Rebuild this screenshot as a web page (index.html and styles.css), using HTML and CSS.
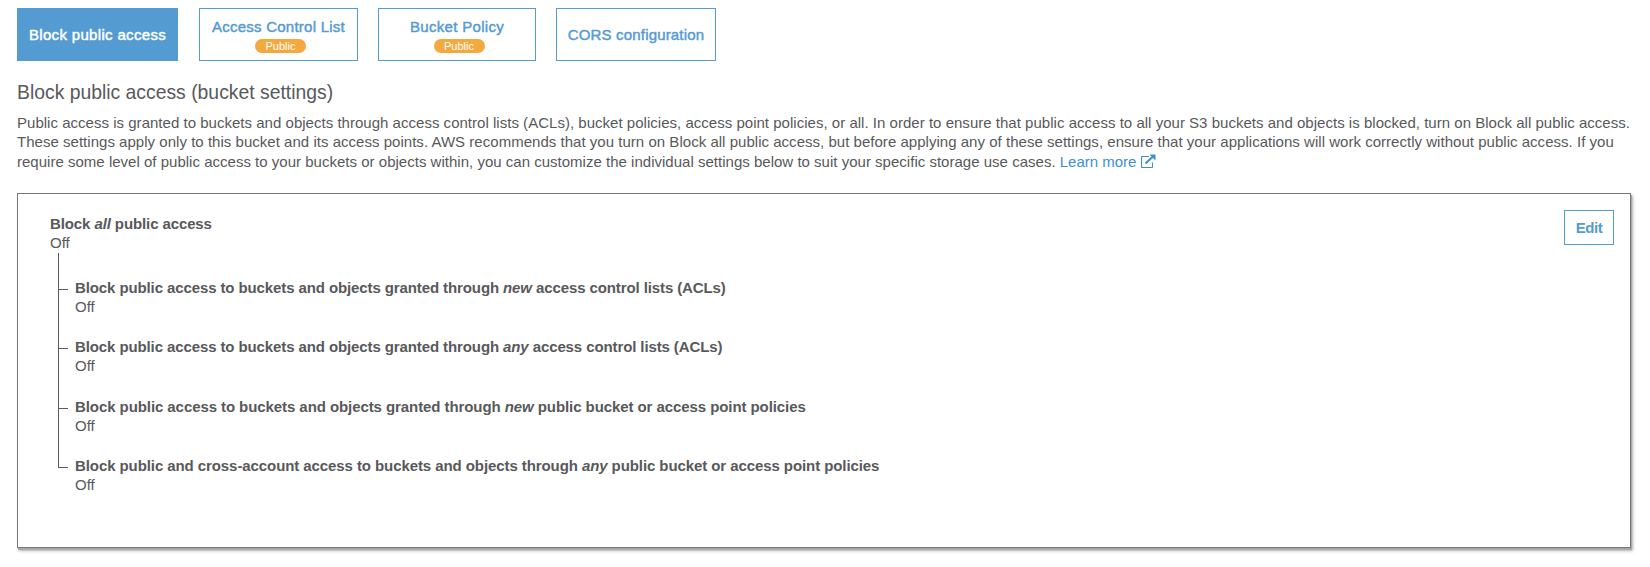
FILE: index.html
```html
<!DOCTYPE html>
<html lang="en">
<head>
<meta charset="utf-8">
<title>Block public access</title>
<link rel="stylesheet" href="styles.css">
</head>
<body>
<nav class="tabs">
  <button class="tab tab-block">Block public access</button>
  <button class="tab tab-acl">Access Control List<span class="badge">Public</span></button>
  <button class="tab tab-policy">Bucket Policy<span class="badge">Public</span></button>
  <button class="tab tab-cors">CORS configuration</button>
</nav>
<main>
  <h1 class="title">Block public access (bucket settings)</h1>
  <p class="intro">
    <span class="line-1">Public access is granted to buckets and objects through access control lists (ACLs), bucket policies, access point policies, or all. In order to ensure that public access to all your S3 buckets and objects is blocked, turn on Block all public access.</span><br>
    <span class="line-2">These settings apply only to this bucket and its access points. AWS recommends that you turn on Block all public access, but before applying any of these settings, ensure that your applications will work correctly without public access. If you</span><br>
    <span class="line-3">require some level of public access to your buckets or objects within, you can customize the individual settings below to suit your specific storage use cases.</span>
    <a class="learn">Learn more<svg class="external" viewBox="0 0 16 15" width="16" height="15" fill="none" stroke="currentColor"><path d="M9 2.5H2Q1.5 2.5 1.5 3V13Q1.5 13.5 2 13.5H12Q12.5 13.5 12.5 13V8.5" stroke-width="1.1"/><path d="M5.5 9.5L13 2.5" stroke-width="2"/><path d="M9.5 .5H15.5V6.5Z" fill="currentColor" stroke="none"/></svg></a>
  </p>
  <section class="panel">
    <div class="settings">
      <h2 class="name">Block <em>all</em> public access</h2>
      <div class="state">Off</div>
      <ul class="tree">
        <li class="item"><h3 class="name">Block public access to buckets and objects granted through <em>new</em> access control lists (ACLs)</h3><div class="state">Off</div></li>
        <li class="item"><h3 class="name">Block public access to buckets and objects granted through <em>any</em> access control lists (ACLs)</h3><div class="state">Off</div></li>
        <li class="item"><h3 class="name name-new">Block public access to buckets and objects granted through <em>new</em> public bucket or access point policies</h3><div class="state">Off</div></li>
        <li class="item"><h3 class="name name-any">Block public and cross-account access to buckets and objects through <em>any</em> public bucket or access point policies</h3><div class="state">Off</div></li>
      </ul>
    </div>
    <button class="edit">Edit</button>
  </section>
</main>
</body>
</html>
```
FILE: styles.css
```css
* { box-sizing: border-box; }

body {
  margin: 0;
  padding: 8px 19px 12px 17px;
  background: #fff;
  color: #58595b;
  font: 15px/19.3px "Liberation Sans", Arial, sans-serif;
  white-space: nowrap;
}

h1, h2, h3, p, ul { margin: 0; padding: 0; }

.tabs { display: flex; }

.tab {
  display: flex;
  flex-direction: column;
  align-items: center;
  justify-content: center;
  height: 53px;
  padding: 0;
  border: 1px solid #549bd2;
  background: #fff;
  color: #549bd2;
  font: inherit;
  -webkit-text-stroke: 0.45px currentColor;
}

.tab-block {
  width: 161px;
  margin-right: 21px;
  background: #549bd2;
  color: #fff;
  letter-spacing: 0.33px;
}

.tab-acl { width: 159px; margin-right: 20px; letter-spacing: 0.24px; }
.tab-policy { width: 158px; margin-right: 20px; letter-spacing: 0.32px; }
.tab-cors { width: 160px; letter-spacing: 0.17px; }

.badge {
  width: 51px;
  height: 14px;
  margin: 2px 0 -1px 4px;
  border-radius: 7px;
  background: #f3a93e;
  color: #fff;
  font-size: 11px;
  line-height: 14px;
  letter-spacing: 0;
  text-align: center;
  -webkit-text-stroke: 0;
}

.title {
  margin-top: 19px;
  font-size: 19.35px;
  font-weight: 400;
  line-height: 24px;
}

.intro { margin-top: 9px; }
.line-1 { letter-spacing: 0.022px; }
.line-2 { letter-spacing: 0.027px; }
.line-3 { letter-spacing: 0.014px; }

.learn { color: #3d8fce; }
.external { margin-left: 4px; vertical-align: -2px; }

.panel {
  display: flex;
  justify-content: space-between;
  align-items: flex-start;
  height: 355px;
  margin-top: 22px;
  padding: 16px 16px 0 32px;
  border: 1px solid #77787a;
  box-shadow: 1px 2px 1px #a7a8aa, 2px 3px 3px rgba(0, 0, 0, 0.28);
}

.settings { padding-top: 4px; line-height: 19px; }

.name {
  font-size: 15px;
  font-weight: 700;
  letter-spacing: -0.105px;
}

.name-new { letter-spacing: -0.077px; }
.name-any { letter-spacing: -0.083px; }

.tree {
  margin: 0 0 0 8px;
  list-style: none;
}

.item {
  position: relative;
  height: 59.4px;
  padding-left: 17px;
}

.item:first-child { height: 85.4px; padding-top: 26px; }

/* Connector lines between the parent setting and its children */
.item::before {
  content: "";
  position: absolute;
  top: 0;
  left: 0;
  width: 1px;
  height: 100%;
  background: #58595b;
}

.item:first-child::before { top: 1px; }
.item:last-child::before { height: 12px; }

.item::after {
  content: "";
  position: absolute;
  top: 11px;
  left: 0;
  width: 10px;
  height: 1px;
  background: #58595b;
}

.item:first-child::after { top: 37px; }

.edit {
  width: 50px;
  height: 35px;
  padding: 0;
  border: 1px solid #549bd2;
  background: #fff;
  color: #549bd2;
  font: 700 15px/19px "Liberation Sans", Arial, sans-serif;
  letter-spacing: -0.4px;
}
```
